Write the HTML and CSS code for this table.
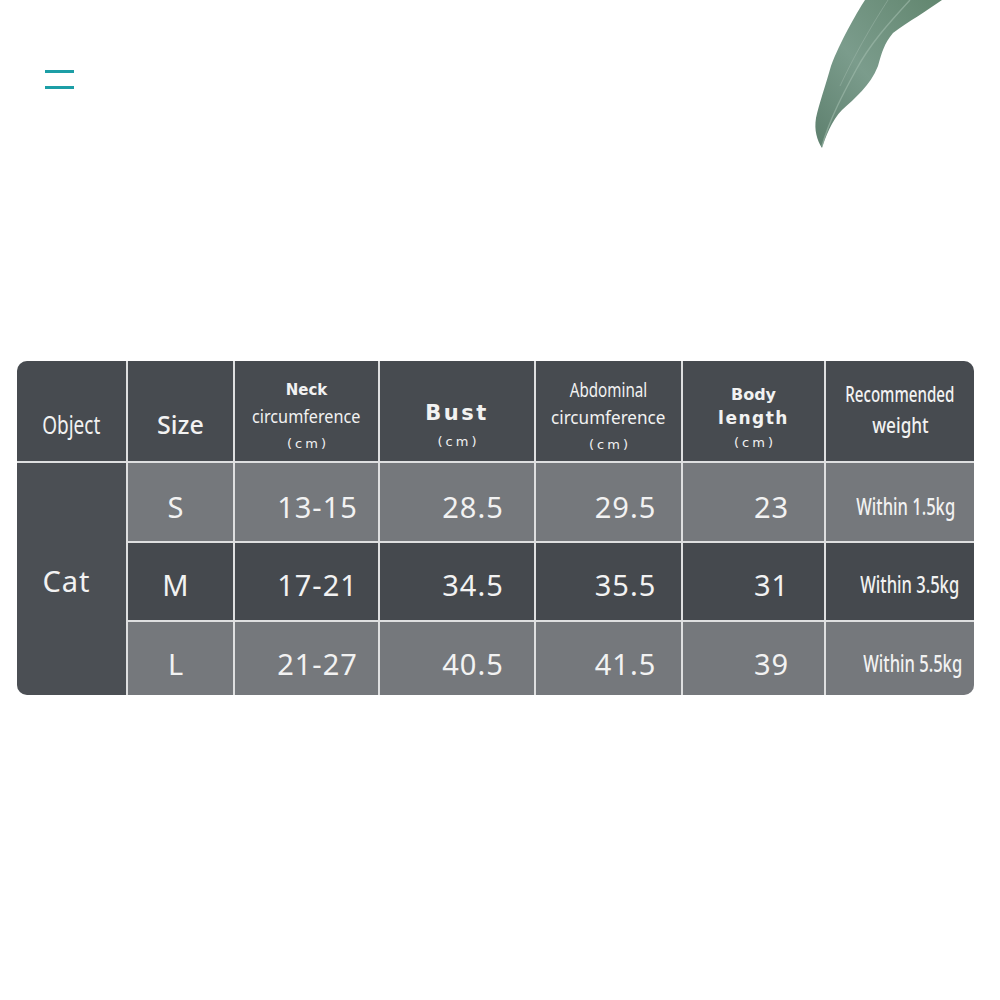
FILE: index.html
```html
<!DOCTYPE html>
<html lang="en">
<head>
<meta charset="utf-8">
<title>Size chart</title>
<link rel="stylesheet" href="styles.css">
</head>
<body>
<div class="page">
  <header class="topbar">
    <button class="menu" aria-label="Menu"><span class="bar"></span><span class="bar"></span></button>
  </header>
  <svg class="leaf" width="160" height="160" viewBox="0 0 160 160" aria-hidden="true">
    <defs>
      <linearGradient id="lg" x1="0" y1="1" x2="1" y2="0">
        <stop offset="0" stop-color="#5d7f6d"/>
        <stop offset="0.45" stop-color="#7b9c8c"/>
        <stop offset="1" stop-color="#62866f"/>
      </linearGradient>
    </defs>
    <path d="M65 0 C56 14 40 42 31 66 C26 84 19 104 16 118 C14 130 17 140 22 148 C25 138 32 120 42 110 C55 98 70 86 78 66 C82 52 84 44 93 33 C108 22 128 10 142 0 Z" fill="url(#lg)"/>
    <path d="M110 0 C88 24 70 44 56 70 C44 92 30 118 22 146" fill="none" stroke="#a2bcae" stroke-width="1.4" opacity="0.6"/>
    <path d="M88 0 C70 28 54 56 40 86" fill="none" stroke="#a9c0b3" stroke-width="0.8" opacity="0.5"/>
  </svg>

  <main class="chart">
    <div class="grid">
      <div class="cell head"><span class="cond c-object">Object</span></div>
      <div class="cell head"><span class="size-h">Size</span></div>
      <div class="cell head stack">
        <span class="wide-s neck">Neck</span>
        <span class="cond c-circ">circumference</span>
        <span class="unit">(cm)</span>
      </div>
      <div class="cell head stack bust">
        <span class="wide-l">Bust</span>
        <span class="unit">(cm)</span>
      </div>
      <div class="cell head stack">
        <span class="cond c-abd">Abdominal</span>
        <span class="cond c-circ2">circumference</span>
        <span class="unit">(cm)</span>
      </div>
      <div class="cell head stack body">
        <span class="wide-s">Body</span>
        <span class="wide-m">length</span>
        <span class="unit">(cm)</span>
      </div>
      <div class="cell head stack rec">
        <span class="cond c-rec">Recommended</span>
        <span class="cond c-weight">weight</span>
      </div>

      <div class="cell object"><span class="num">Cat</span></div>

      <div class="cell light size"><span class="num">S</span></div>
      <div class="cell light val"><span class="num">13-15</span></div>
      <div class="cell light val v2"><span class="num">28.5</span></div>
      <div class="cell light val v3"><span class="num">29.5</span></div>
      <div class="cell light val v4"><span class="num">23</span></div>
      <div class="cell light w1"><span class="cond c-within">Within 1.5kg</span></div>

      <div class="cell dark size"><span class="num">M</span></div>
      <div class="cell dark val"><span class="num">17-21</span></div>
      <div class="cell dark val v2"><span class="num">34.5</span></div>
      <div class="cell dark val v3"><span class="num">35.5</span></div>
      <div class="cell dark val v4"><span class="num">31</span></div>
      <div class="cell dark w2"><span class="cond c-within">Within 3.5kg</span></div>

      <div class="cell light size"><span class="num">L</span></div>
      <div class="cell light val"><span class="num">21-27</span></div>
      <div class="cell light val v2"><span class="num">40.5</span></div>
      <div class="cell light val v3"><span class="num">41.5</span></div>
      <div class="cell light val v4"><span class="num">39</span></div>
      <div class="cell light w3"><span class="cond c-within">Within 5.5kg</span></div>
    </div>
  </main>
</div>
</body>
</html>
```

FILE: styles.css
```css
html, body {
  margin: 0;
  padding: 0;
  background: #ffffff;
}

.page {
  position: relative;
  width: 1000px;
  height: 1000px;
  overflow: hidden;
  font-family: "Noto Sans", "Open Sans", sans-serif;
  color: #f2f2f2;
}

.topbar {
  padding: 70px 0 0 45px;
  display: flex;
}

.menu {
  display: flex;
  flex-direction: column;
  gap: 13px;
  padding: 0;
  margin: 0;
  border: 0;
  background: none;
  width: 29px;
}

.bar {
  display: block;
  width: 29px;
  height: 3px;
  background: #1c9ea6;
}

.leaf {
  position: absolute;
  left: 800px;
  top: 0;
}

.chart {
  margin: 272px 0 0 17px;
  width: 957px;
}

.grid {
  display: grid;
  grid-template-columns: 109px 105px 143px 154px 145px 141px 148px;
  grid-template-rows: 100px 78px 77px 73px;
  gap: 2px;
  background: #dedfe0;
  border-radius: 10px;
  overflow: hidden;
}

.cell {
  display: flex;
  align-items: center;
  justify-content: center;
  line-height: 1;
}

.head {
  background: #474b50;
}

.light {
  background: #75787c;
  padding-top: 9px;
}

.dark {
  background: #45494e;
  padding-top: 6px;
}

.object {
  background: #4b4f54;
  grid-row: 2 / span 3;
  grid-column: 1;
  padding-right: 10px;
  padding-top: 2px;
}

.stack {
  flex-direction: column;
  gap: 0;
}

.cond {
  display: inline-block;
  transform: scaleX(0.8);
  white-space: nowrap;
  font-family: "Noto Sans", sans-serif;
}

.c-object {
  font-size: 25px;
  padding-top: 26px;
  transform: scaleX(0.76);
}

.size-h {
  font-size: 25px;
  font-weight: 500;
  padding-top: 26px;
}

.wide-s {
  font-family: "DejaVu Sans", sans-serif;
  font-weight: bold;
  font-size: 16px;
  line-height: 24px;
}

.neck {
  font-size: 15px;
}

.wide-m {
  font-family: "DejaVu Sans", sans-serif;
  font-weight: bold;
  font-size: 17px;
  letter-spacing: 1.5px;
  line-height: 22px;
}

.wide-l {
  font-family: "DejaVu Sans", sans-serif;
  font-weight: bold;
  font-size: 21px;
  letter-spacing: 2.5px;
  line-height: 30px;
}

.c-circ {
  font-size: 18px;
  line-height: 28px;
  transform: scaleX(0.9);
}

.c-circ2 {
  font-size: 18px;
  line-height: 28px;
  transform: scaleX(0.95);
}

.c-abd {
  font-size: 19px;
  line-height: 26px;
  transform: scaleX(0.8);
}

.unit {
  font-family: "DejaVu Sans", sans-serif;
  font-size: 13px;
  letter-spacing: 3px;
  line-height: 28px;
  padding-left: 3px;
}

.stack:not(.rec) {
  padding-top: 14px;
}

.bust {
  padding-top: 32px !important;
}

.body {
  padding-top: 18px !important;
}

.c-rec {
  font-size: 21px;
  font-weight: 500;
  line-height: 31px;
  transform: scaleX(0.72);
}

.c-weight {
  font-size: 21px;
  font-weight: 500;
  line-height: 31px;
  transform: scaleX(0.82);
}

.rec {
  padding-bottom: 2px;
}

.num {
  font-size: 29px;
  letter-spacing: 1px;
}

.size {
  padding-right: 9px;
}

.val {
  padding-left: 22px;
}

.v2 { padding-left: 32px; }
.v3 { padding-left: 34px; }
.v4 { padding-left: 36px; }

.c-within {
  font-size: 23px;
  font-weight: 500;
  transform: scaleX(0.72);
}

.w1 { padding-left: 12px; }
.w2 { padding-left: 20px; }
.w3 { padding-left: 26px; }
```
